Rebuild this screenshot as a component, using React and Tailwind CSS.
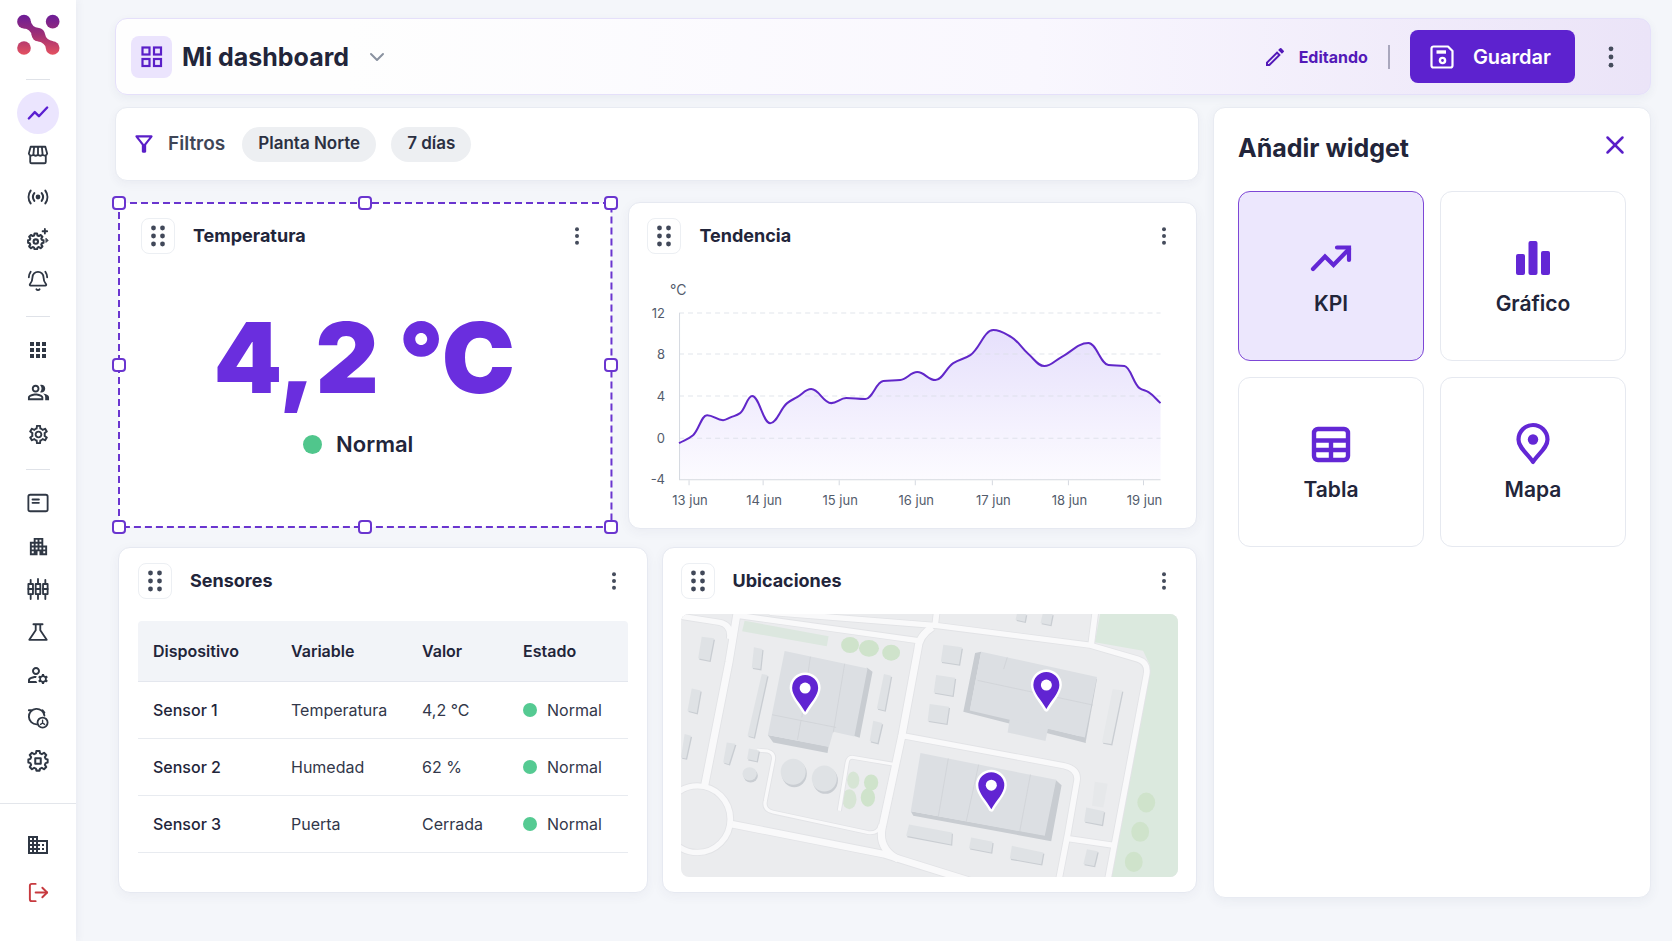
import { useState } from "react";
import { BellRing, ChevronDown, LogOut, X } from "lucide-react";
import {
  MdApartment,
  MdApps,
  MdDomain,
  MdOutlineFilterAlt,
  MdOutlineManageAccounts,
  MdOutlineModeEdit,
  MdOutlinePeopleAlt,
  MdOutlineSettings,
} from "react-icons/md";

const stroke = {
  fill: "none",
  stroke: "currentColor",
  strokeWidth: 2,
  strokeLinecap: "round",
  strokeLinejoin: "round",
};

function Svg({ size = 22, children, ...rest }) {
  return (
    <svg width={size} height={size} viewBox="0 0 24 24" aria-hidden="true" {...stroke} {...rest}>
      {children}
    </svg>
  );
}

const GEAR =
  "M10.3 2.5h3.4l.6 2.7 1.9.8 2.4-1.5 2.4 2.4-1.5 2.4.8 1.9 2.2.6v3.4l-2.2.6-.8 1.9 1.5 2.4-2.4 2.4-2.4-1.5-1.9.8-.6 2.2h-3.4l-.6-2.2-1.9-.8-2.4 1.5L3 20.1l1.5-2.4-.8-1.9-2.2-.6v-3.4l2.2-.6.8-1.9L3 6.9l2.4-2.4L7.8 6l1.9-.8z";

const TrendIcon = () => (
  <Svg strokeWidth="2.6">
    <path d="M2 18 8.500 11l4.500 4.500L22 6" />
  </Svg>
);

const StoreIcon = () => (
  <Svg>
    <path d="M4 3h16l2 7.500a2.800 2.800 0 0 1-5 1 3 3 0 0 1-5 0 3 3 0 0 1-5 0 2.800 2.800 0 0 1-5-1zM3.500 13v6.500A1.500 1.500 0 0 0 5 21h14a1.500 1.500 0 0 0 1.500-1.500V13M7.800 3 7 11M12 3v8M16.200 3l.8 8" />
  </Svg>
);

const SensorIcon = () => (
  <Svg strokeWidth="2.2">
    <circle cx="12" cy="12" r="1.500" fill="currentColor" />
    <path d="M4 5a12 12 0 0 0 0 14M20 5a12 12 0 0 1 0 14M8 7.800a7 7 0 0 0 0 8.400M16 7.800a7 7 0 0 1 0 8.400" />
  </Svg>
);

const GearSparkIcon = () => (
  <Svg>
    <g transform="translate(0 4) scale(.8)" strokeWidth="2.800">
      <path d={GEAR} />
      <circle cx="12" cy="13.500" r="3" />
    </g>
    <path d="M19.500 1v5M17 3.500h5" />
    <path d="m21 11.500 2 2-2 2z" fill="currentColor" strokeWidth="1" />
  </Svg>
);

const CardIcon = () => (
  <Svg>
    <rect x="1.500" y="3" width="21" height="18" rx="2" />
    <path d="M6 8.200h7M6 11.800h7" />
  </Svg>
);

const CandlesIcon = () => (
  <Svg>
    <path d="M4 2v4M4 18v5M12 1v5M12 18v5M20 2v4M20 18v5" />
    <rect x="1.500" y="6.500" width="5" height="11" />
    <rect x="9.500" y="6.500" width="5" height="11" />
    <rect x="17.500" y="6.500" width="5" height="11" />
    <path d="M1.500 12h5M9.500 12h5M17.500 12h5" />
  </Svg>
);

const FlaskIcon = () => (
  <Svg>
    <path d="M7 3.500h10M9.500 4v6L2.500 20.500h19L14.500 10V4" />
  </Svg>
);

const ScopeIcon = () => (
  <Svg>
    <path d="M10.500 19a8.500 8.500 0 1 1 8.500-9.500M2 3.500h4M17 3.500l2 2.500" />
    <circle cx="17" cy="17" r="5.500" />
    <path d="M17 14.500v2M14.800 19l2.200-1.500 2.200 1.500" strokeWidth="1.500" />
  </Svg>
);

const GearSquareIcon = () => (
  <Svg strokeWidth="2.2">
    <g transform="translate(0 -1.500)">
      <path d={GEAR} />
      <rect x="9" y="10.500" width="6" height="6" />
    </g>
  </Svg>
);

const MAIN_NAV = [
  { label: "Tendencias", icon: <TrendIcon />, active: true },
  { label: "Tienda", icon: <StoreIcon /> },
  { label: "Sensores", icon: <SensorIcon /> },
  { label: "Automatización", icon: <GearSparkIcon /> },
  { label: "Alertas", icon: <BellRing size={22} /> },
];

const ADMIN_NAV = [
  { label: "Aplicaciones", icon: <MdApps size={24} /> },
  { label: "Usuarios", icon: <MdOutlinePeopleAlt size={23} /> },
  { label: "Ajustes", icon: <MdOutlineSettings size={23} /> },
];

const SYSTEM_NAV = [
  { label: "Paneles", icon: <CardIcon /> },
  { label: "Edificios", icon: <MdApartment size={23} /> },
  { label: "Controles", icon: <CandlesIcon /> },
  { label: "Laboratorio", icon: <FlaskIcon /> },
  { label: "Cuentas", icon: <MdOutlineManageAccounts size={24} /> },
  { label: "Auditoría", icon: <ScopeIcon /> },
  { label: "Sistema", icon: <GearSquareIcon /> },
];

function Logo() {
  return (
    <svg width="43" height="42" viewBox="0 0 129 124" aria-hidden="true">
      <defs>
        <linearGradient id="logo" gradientUnits="userSpaceOnUse" x1="0" y1="0" x2="0" y2="124">
          <stop offset="0" stopColor="#6a1c98" />
          <stop offset=".5" stopColor="#a02f74" />
          <stop offset="1" stopColor="#e8535f" />
        </linearGradient>
      </defs>
      <g fill="url(#logo)">
        <circle cx="21" cy="22" r="20.500" />
        <circle cx="107" cy="22" r="20.500" />
        <circle cx="21" cy="101" r="20.500" />
        <circle cx="107" cy="101" r="20.500" />
        <circle cx="64" cy="61" r="20" />
        <path d="M41 19Q43 37 66 41L84 59Q87 77 109 81L87 103Q85 86 62 81L44 63Q41 45 19 42Z" />
      </g>
    </svg>
  );
}

function NavItem({ label, icon, active, danger }) {
  const tone = danger ? "text-[#c73a3f]" : active ? "bg-[#ebe5fe] text-[#5a1fd1]" : "text-[#2f3744]";
  return (
    <a
      href="#"
      aria-label={label}
      className={`flex h-[42px] w-[42px] items-center justify-center rounded-full ${tone}`}
    >
      {icon}
    </a>
  );
}

function Sidebar() {
  return (
    <aside className="flex w-[76px] shrink-0 flex-col items-center bg-white pt-[14px] shadow-[2px_0_8px_rgba(50,60,100,0.05)]">
      <Logo />
      <div className="mt-[23px] h-px w-6 bg-[#dfe2e8]" />
      <nav className="mt-3 flex flex-col">
        {MAIN_NAV.map((item) => (
          <NavItem key={item.label} {...item} />
        ))}
      </nav>
      <div className="mt-3.5 h-px w-6 bg-[#dfe2e8]" />
      <nav className="mt-3 flex flex-col">
        {ADMIN_NAV.map((item) => (
          <NavItem key={item.label} {...item} />
        ))}
      </nav>
      <div className="mt-3.5 h-px w-6 bg-[#dfe2e8]" />
      <nav className="mt-3 flex flex-col gap-px">
        {SYSTEM_NAV.map((item) => (
          <NavItem key={item.label} {...item} />
        ))}
      </nav>
      <div className="mt-auto flex w-full flex-col items-center gap-[5px] border-t border-[#e3e6eb] pt-5 pb-7">
        <NavItem label="Organización" icon={<MdDomain size={24} />} />
        <NavItem label="Cerrar sesión" icon={<LogOut size={23} />} danger />
      </div>
    </aside>
  );
}

function MoreButton({ big }) {
  return (
    <button
      aria-label="Más opciones"
      className="flex h-8 w-8 items-center justify-center rounded-full text-[#454c5c] hover:bg-gray-100"
    >
      <svg width={big ? 24 : 20} height={big ? 24 : 20} viewBox="0 0 20 20" fill="currentColor">
        <circle cx="10" cy="3.200" r="2" />
        <circle cx="10" cy="10" r="2" />
        <circle cx="10" cy="16.800" r="2" />
      </svg>
    </button>
  );
}

function Header() {
  return (
    <header className="flex h-[77px] items-center rounded-xl border border-[#e5e0fa] bg-linear-to-r from-[#fefefe] from-15% via-[#f9f7fe] via-60% to-[#ebe4f8] pr-[23px] pl-[15px] shadow-[0_3px_10px_rgba(50,60,100,0.06)]">
      <div className="flex h-[42px] w-[41px] items-center justify-center rounded-lg bg-[#ebe4fd] text-[#5a1fc8]">
        <svg width="22" height="22" viewBox="0 0 22 22" fill="none" stroke="currentColor" strokeWidth="2.200" aria-hidden="true">
          <rect x="1.500" y="1.500" width="7" height="7" />
          <rect x="13" y="1.500" width="7" height="7" />
          <rect x="1.500" y="13" width="7" height="7" />
          <rect x="13" y="13" width="7" height="7" />
        </svg>
      </div>
      <h1 className="ml-2.5 text-[25px] leading-9 font-bold text-[#22253a]">Mi dashboard</h1>
      <button aria-label="Cambiar dashboard" className="ml-4 text-[#8a92a0]">
        <ChevronDown size={24} />
      </button>

      <div className="ml-auto flex items-center">
        <button className="flex items-center gap-3 text-base font-bold text-[#5319b8]">
          <MdOutlineModeEdit size={24} />
          Editando
        </button>
        <div className="mx-5 h-6 w-0.5 bg-[#a9a7bd]" />
        <button className="flex h-[53px] items-center gap-[18px] rounded-lg bg-[#5d22cf] pr-6 pl-[19px] text-xl font-semibold text-white hover:bg-[#4f1bb8]">
          <svg width="26" height="26" viewBox="0 0 26 26" fill="none" stroke="currentColor" strokeWidth="2.200" strokeLinejoin="round" aria-hidden="true">
            <path d="M4.500 2.500h14.500l4.500 4.500v14.500a2 2 0 0 1-2 2h-17a2 2 0 0 1-2-2v-17a2 2 0 0 1 2-2z" />
            <path d="M7.500 8h9.500" strokeWidth="3.400" />
            <circle cx="13.500" cy="16.500" r="2.600" strokeWidth="2.400" />
          </svg>
          Guardar
        </button>
        <div className="ml-5">
          <MoreButton big />
        </div>
      </div>
    </header>
  );
}

function Filters() {
  return (
    <section className="flex h-[74px] items-center rounded-xl border border-[#e8ebf2] bg-white px-[15px] shadow-[0_3px_10px_rgba(50,60,100,0.05)]">
      <MdOutlineFilterAlt size={26} className="text-[#5a1fc8]" />
      <span className="ml-[11px] text-[19px] font-semibold text-[#3f4657]">Filtros</span>
      <div className="ml-[17px] flex gap-[15px]">
        <button className="h-[35px] rounded-full bg-[#edeff2] px-4 text-[17px] font-semibold text-[#2b3042]">Planta Norte</button>
        <button className="h-[35px] rounded-full bg-[#edeff2] px-4 text-[17px] font-semibold text-[#2b3042]">7 días</button>
      </div>
    </section>
  );
}

function WidgetHead({ title }) {
  return (
    <div className="flex items-center">
      <button
        aria-label={`Mover ${title}`}
        className="flex h-9 w-[34px] cursor-grab items-center justify-center rounded-lg border border-[#eceff3] text-[#414859]"
      >
        <svg width="16" height="22" viewBox="0 0 16 22" fill="currentColor">
          {[3, 11, 19].map((y) => (
            <g key={y}>
              <circle cx="3.500" cy={y} r="2.400" />
              <circle cx="12.500" cy={y} r="2.400" />
            </g>
          ))}
        </svg>
      </button>
      <h2 className="ml-[18px] text-lg font-bold text-[#22253a]">{title}</h2>
      <div className="-mr-0.5 ml-auto">
        <MoreButton />
      </div>
    </div>
  );
}

function Card({ className = "", children }) {
  return (
    <section
      className={`rounded-xl border border-[#e6e9f1] bg-white pt-[15px] shadow-[0_3px_12px_rgba(50,60,100,0.05)] ${className}`}
    >
      {children}
    </section>
  );
}

// resize handles of the selected widget
const HANDLES = [
  "top-0 left-0",
  "top-0 left-1/2",
  "top-0 left-full",
  "top-1/2 left-0",
  "top-1/2 left-full",
  "top-full left-0",
  "top-full left-1/2",
  "top-full left-full",
];

function TemperatureWidget() {
  return (
    <section className="relative mt-px mb-0.5 bg-white pt-[15px] pr-5 pl-[22px]">
      <svg className="absolute inset-0 h-full w-full overflow-visible" aria-hidden="true">
        <rect width="100%" height="100%" fill="none" stroke="#6a35cf" strokeWidth="2" strokeDasharray="7 4" />
      </svg>
      {HANDLES.map((pos) => (
        <span
          key={pos}
          className={`absolute h-[14px] w-[14px] -translate-x-1/2 -translate-y-1/2 rounded-[4px] border-2 border-[#6a35cf] bg-white ${pos}`}
        />
      ))}
      <div className="relative">
        <WidgetHead title="Temperatura" />
        <p className="mt-[54px] pr-1 text-center text-[98px] leading-[100px] font-black text-[#6a2ede]">4,2 °C</p>
        <p className="mt-5 flex items-center justify-center gap-3.5 pr-4 text-[22px] leading-8 font-semibold text-[#22253a]">
          <span className="h-[19px] w-[19px] rounded-full bg-[#50c68c]" />
          Normal
        </p>
      </div>
    </section>
  );
}

const TREND = [
  [31, 167], [45, 159], [59, 139], [75, 144], [83, 141], [92, 137], [104, 120], [122, 147], [139, 127],
  [149, 121], [163, 113], [183, 127], [198, 122], [217, 123], [235, 105], [252, 104], [269, 96], [287, 104],
  [305, 87], [322, 79], [345, 54], [363, 61], [380, 78], [396, 90], [413, 81], [440, 67], [460, 89],
  [476, 90], [491, 112], [500, 116], [512, 127],
];

const Y_TICKS = [
  ["12", 37], ["8", 78], ["4", 120], ["0", 162], ["-4", 203],
];

const X_TICKS = [
  ["13 jun", 41], ["14 jun", 115], ["15 jun", 191], ["16 jun", 267], ["17 jun", 344], ["18 jun", 420], ["19 jun", 495],
];

// monotone cubic through the points, so peaks never overshoot
function smoothPath(pts) {
  const slope = pts.slice(1).map((p, i) => (p[1] - pts[i][1]) / (p[0] - pts[i][0]));
  const tan = pts.map((_, i) => {
    if (i === 0) return slope[0];
    if (i === pts.length - 1) return slope[i - 1];
    const a = slope[i - 1];
    const b = slope[i];
    return a * b <= 0 ? 0 : (2 * a * b) / (a + b);
  });
  let d = `M${pts[0][0]} ${pts[0][1]}`;
  for (let i = 1; i < pts.length; i++) {
    const [x0, y0] = pts[i - 1];
    const [x1, y1] = pts[i];
    const h = (x1 - x0) / 2.5;
    d += `C${x0 + h} ${y0 + tan[i - 1] * h} ${x1 - h} ${y1 - tan[i] * h} ${x1} ${y1}`;
  }
  return d;
}

function TrendWidget() {
  const line = smoothPath(TREND);
  return (
    <Card className="px-[18px]">
      <WidgetHead title="Tendencia" />
      <svg viewBox="-1 0 530 240" className="mt-[22px] block w-full" role="img" aria-label="Tendencia de temperatura">
        <defs>
          <linearGradient id="area" x1="0" y1="0" x2="0" y2="1">
            <stop offset="0" stopColor="#e6e0fc" />
            <stop offset="1" stopColor="#fcfbff" />
          </linearGradient>
        </defs>
        <path d={`${line}V203H31Z`} fill="url(#area)" />
        {Y_TICKS.slice(0, 4).map(([label, y]) => (
          <path key={label} d={`M31 ${y}H512`} stroke="#d9dde6" strokeOpacity=".8" strokeDasharray="5 4" />
        ))}
        <path d="M31.500 37V203.500H512" fill="none" stroke="#d5d9e0" />
        <path d={line} fill="none" stroke="#6127c9" strokeWidth="2" />
        <g fill="#535c6c" fontSize="13">
          <text x="22" y="19" fontSize="14">°C</text>
          {Y_TICKS.map(([label, y]) => (
            <text key={label} x="17" y={y + 5} textAnchor="end">{label}</text>
          ))}
          {X_TICKS.map(([label, x]) => (
            <g key={label}>
              <path d={`M${x} 204v5`} stroke="#d5d9e0" />
              <text x={x + 1} y="229" textAnchor="middle">{label}</text>
            </g>
          ))}
        </g>
      </svg>
    </Card>
  );
}

const SENSORS = [
  { name: "Sensor 1", variable: "Temperatura", value: "4,2 °C", state: "Normal" },
  { name: "Sensor 2", variable: "Humedad", value: "62 %", state: "Normal" },
  { name: "Sensor 3", variable: "Puerta", value: "Cerrada", state: "Normal" },
];

function SensorsWidget() {
  return (
    <Card className="px-[19px]">
      <WidgetHead title="Sensores" />
      <table className="mt-[22px] w-full table-fixed text-left text-base text-[#32374a]">
        <thead>
          <tr className="h-[60px] border-b border-[#e4e7ee] bg-[#f2f4f8] text-[#22253a]">
            <th className="w-[138px] rounded-tl pl-[15px] font-semibold">Dispositivo</th>
            <th className="w-[131px] pl-[15px] font-semibold">Variable</th>
            <th className="w-[101px] pl-[15px] font-semibold">Valor</th>
            <th className="rounded-tr pl-[15px] font-semibold">Estado</th>
          </tr>
        </thead>
        <tbody>
          {SENSORS.map((s) => (
            <tr key={s.name} className="h-[57px] border-b border-[#e8ebf0]">
              <td className="pl-[15px] font-medium text-[#22253a]">{s.name}</td>
              <td className="pl-[15px]">{s.variable}</td>
              <td className="pl-[15px]">{s.value}</td>
              <td className="pl-[15px]">
                <span className="flex items-center gap-2.5">
                  <span className="h-3.5 w-3.5 rounded-full bg-[#55ca92]" />
                  {s.state}
                </span>
              </td>
            </tr>
          ))}
        </tbody>
      </table>
    </Card>
  );
}

const PINS = [
  [124, 74],
  [365, 71],
  [310, 171],
];

const SMALL_BUILDINGS = [
  "130,303 164,308 152,375 120,368",
  "102,458 127,464 116,532 90,525",
  "82,595 100,600 86,668 72,665",
  "276,335 300,340 294,400 270,396",
  "298,415 314,418 276,605 258,600",
  "200,620 224,624 206,685 190,680",
  "262,638 290,644 284,676 257,670",
  "640,415 660,420 642,524 620,518",
  "610,555 635,562 622,622 600,616",
  "806,327 858,335 850,386 799,378",
  "786,418 839,426 832,480 779,470",
  "768,505 822,513 815,564 762,555",
  "710,866 830,890 828,926 702,900",
  "884,905 944,918 940,950 878,937",
  "998,930 1086,950 1080,985 992,968",
  "1206,815 1256,826 1250,867 1200,857",
  "1208,940 1238,946 1228,990 1198,984",
  "1012,235 1038,235 1034,258 1008,252",
  "1084,235 1112,235 1106,268 1078,262",
];

function SiteMap() {
  return (
    <svg viewBox="0 0 497 263" className="mt-[15px] block w-full rounded-lg" role="img" aria-label="Mapa de ubicaciones">
      <rect width="497" height="263" fill="#ebecee" />
      <g transform="scale(.357 .3333) translate(-72 -235)">
        <path d="M1245 235H1464V1025H1275L1385 390L1365 345L1230 320Z" fill="#dbe9de" />
        <path d="M250 255 485 302 480 332 243 287Z" fill="#dce7df" />
        <g fill="#cfe3cb">
          <ellipse cx="545" cy="328" rx="25" ry="24" />
          <ellipse cx="598" cy="338" rx="28" ry="25" />
          <ellipse cx="660" cy="351" rx="25" ry="24" />
          <ellipse cx="1374" cy="800" rx="25" ry="30" />
          <ellipse cx="1357" cy="888" rx="25" ry="30" />
          <ellipse cx="1339" cy="978" rx="25" ry="30" />
          <ellipse cx="554" cy="733" rx="17" ry="26" opacity=".7" />
          <ellipse cx="604" cy="740" rx="20" ry="24" />
          <ellipse cx="543" cy="790" rx="20" ry="30" opacity=".7" />
          <ellipse cx="595" cy="785" rx="20" ry="28" />
        </g>

        {/* streets: soft kerb below, light surface on top */}
        {[
          { color: "#e2e3e6", extra: 5 },
          { color: "#f9f9fa", extra: 0 },
        ].map(({ color, extra }) => (
          <g key={color} fill="none" stroke={color} strokeLinejoin="round">
            <g strokeWidth={20 + extra}>
              <path d="M230 225 206 380 138 750" />
              <path d="M215 865 640 955 880 1035" />
              <path d="M775 275Q738 300 735 340L690 600 634 880Q625 940 680 970" />
            </g>
            <g strokeWidth={16 + extra}>
              <path d="M60 240 180 260Q215 268 208 310" />
              <path d="M235 240 745 316" />
              <path d="M320 230 790 270 1215 328 1350 370Q1380 380 1375 415L1265 1040" />
              <path d="M788 225 783 270M1232 225 1220 325" />
              <path d="M695 600 1145 690Q1185 700 1180 735L1155 890 1128 1040" />
              <path d="M1155 908 1280 928" />
              <ellipse cx="118" cy="850" rx="92" ry="100" />
            </g>
            <g strokeWidth={9 + extra}>
              <path d="M285 643 315 646Q335 652 330 675L308 795Q302 822 330 829L595 890Q625 895 630 865" />
              <path d="M665 685 555 665Q540 662 537 680L515 825" />
            </g>
          </g>
        ))}

        {/* small buildings, each with a darker edge at its foot */}
        <g fill="#c9cdd2" transform="translate(3 4)">
          {SMALL_BUILDINGS.map((points) => (
            <polygon key={points} points={points} />
          ))}
          <ellipse cx="264" cy="716" rx="20" ry="20" />
          <ellipse cx="386" cy="710" rx="35" ry="40" />
          <ellipse cx="473" cy="730" rx="35" ry="40" />
          <path d="M1280 460 1307 464 1276 625 1250 620Z" />
        </g>
        <g fill="#dfe2e5">
          {SMALL_BUILDINGS.map((points) => (
            <polygon key={points} points={points} />
          ))}
          <ellipse cx="264" cy="714" rx="20" ry="20" />
          <ellipse cx="386" cy="708" rx="35" ry="39" />
          <ellipse cx="473" cy="728" rx="35" ry="39" />
          <path d="M1280 460 1307 464 1276 625 1250 620Z" fill="#e6e8ea" />
          <path d="M1230 738 1266 744 1254 815 1222 810Z" fill="#e6e8ea" />
        </g>

        {/* warehouses */}
        <g fill="#c8ccd1">
          <path d="M315 598 485 632 482 652 330 620ZM592 395 608 408 572 606 555 600Z" />
          <path d="M895 352 912 348 880 528 862 528ZM862 528 880 520 1195 603 1205 622Z" />
          <path d="M1236 430 1204 622 1188 602 1215 420Z" />
          <path d="M715 826 1090 898 1108 916 722 840ZM1120 732 1137 748 1108 916 1088 900Z" />
        </g>
        <g fill="#dcdfe3">
          <path d="M362 346 594 398 557 602 498 588 486 634 315 598Z" />
          <path d="M912 348 1236 424 1202 605 880 524Z" />
          <path d="M742 652 1122 732 1090 900 715 826Z" />
          <path d="M992 550 1100 572 1092 616 986 590Z" />
        </g>
        <g fill="none" stroke="#cdd1d5" strokeWidth="2">
          <path d="M434 363 410 545M530 384 498 590M327 537 506 575M408 553 398 612" />
          <path d="M985 365 975 400M902 434 1225 508" />
          <path d="M820 668 792 842M905 686 870 858M1050 716 1020 886" />
        </g>
      </g>

      {PINS.map(([x, y]) => (
        <g key={x} transform={`translate(${x} ${y})`}>
          <path
            d="M0 24C-5 15-13 8-13 0A13 13 0 1 1 13 0C13 8 5 15 0 24Z"
            fill="#6124d2"
            stroke="#fff"
            strokeWidth="5"
            strokeLinejoin="round"
            paintOrder="stroke"
          />
          <circle r="5.500" fill="#fff" />
        </g>
      ))}
    </svg>
  );
}

function LocationsWidget() {
  return (
    <Card className="px-[18px] pb-[14px]">
      <WidgetHead title="Ubicaciones" />
      <SiteMap />
    </Card>
  );
}

const WIDGET_TYPES = [
  {
    label: "KPI",
    icon: (
      <g fill="none" stroke="currentColor" strokeWidth="4.200">
        <path d="M4 33 16 20.500 24.500 29 40 13" strokeLinecap="round" />
        <path d="M28 11.500H40V24" strokeLinecap="round" />
      </g>
    ),
  },
  {
    label: "Gráfico",
    icon: (
      <g fill="currentColor">
        <rect x="5" y="18" width="9" height="21" rx="2" />
        <rect x="17.500" y="5" width="9" height="34" rx="2" />
        <rect x="30" y="15" width="9" height="24" rx="2" />
      </g>
    ),
  },
  {
    label: "Tabla",
    icon: (
      <g fill="none" stroke="currentColor" strokeWidth="4.400">
        <rect x="5" y="7" width="34" height="31" rx="4" />
        <path d="M5 18.500H39M5 28H39M22 18.500V38" />
      </g>
    ),
  },
  {
    label: "Mapa",
    icon: (
      <g>
        <path
          d="M22 40C17 32 7.500 26 7.500 17.500A14.500 14.500 0 0 1 36.500 17.500C36.500 26 27 32 22 40Z"
          fill="none"
          stroke="currentColor"
          strokeWidth="4.200"
          strokeLinejoin="round"
        />
        <circle cx="22" cy="17.500" r="5.200" fill="currentColor" />
      </g>
    ),
  },
];

function AddWidgetPanel() {
  const [selected, setSelected] = useState("KPI");
  return (
    <aside className="w-[438px] shrink-0 rounded-xl border border-[#e8ebf2] bg-white px-6 pt-[22px] shadow-[0_3px_12px_rgba(50,60,100,0.06)]">
      <div className="flex items-start justify-between">
        <h2 className="text-[25px] leading-9 font-bold text-[#22253a]">Añadir widget</h2>
        <button aria-label="Cerrar" className="-mr-1 text-[#5a1fc8]">
          <X size={30} />
        </button>
      </div>
      <div className="mt-[25px] grid grid-cols-2 gap-4">
        {WIDGET_TYPES.map(({ label, icon }) => (
          <button
            key={label}
            onClick={() => setSelected(label)}
            className={`flex h-[170px] flex-col items-center justify-center gap-2 rounded-xl border pt-1 text-[21px] leading-8 font-semibold text-[#22253a] ${
              selected === label ? "border-[#7d47d6] bg-[#ece7fd]" : "border-[#e6e9f0] bg-white"
            }`}
          >
            <svg width="44" height="44" viewBox="0 0 44 44" className="text-[#6327d5]" aria-hidden="true">
              {icon}
            </svg>
            {label}
          </button>
        ))}
      </div>
    </aside>
  );
}

export default function App() {
  return (
    <div className="flex min-h-screen bg-[#f4f6fa] font-['Inter','Liberation_Sans',sans-serif]">
      <Sidebar />
      <main className="flex min-w-0 flex-1 flex-col gap-3 pt-[18px] pr-[21px] pb-[43px] pl-[39px]">
        <Header />
        <div className="flex flex-1 gap-3.5">
          <div className="flex min-w-0 flex-1 flex-col">
            <Filters />
            <div className="mt-[21px] grid min-h-[327px] grid-cols-[492fr_568fr] gap-[17px] pr-0.5 pl-1">
              <TemperatureWidget />
              <TrendWidget />
            </div>
            <div className="mt-[18px] grid min-h-[346px] grid-cols-[530fr_536fr] gap-3.5 pr-0.5 pl-[3px]">
              <SensorsWidget />
              <LocationsWidget />
            </div>
          </div>
          <AddWidgetPanel />
        </div>
      </main>
    </div>
  );
}
